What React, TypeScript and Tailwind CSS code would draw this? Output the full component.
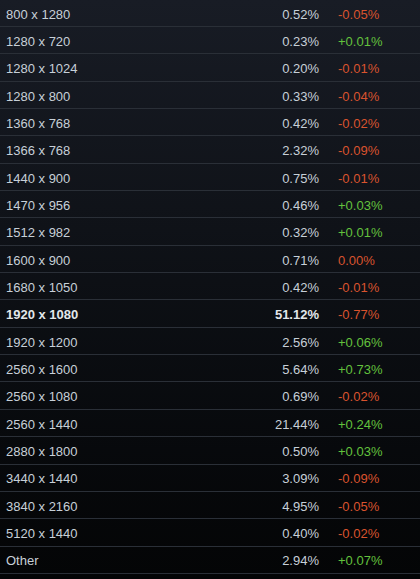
import React from "react";

type Row = { res: string; pct: string; change: string; bold?: boolean };

const rows: Row[] = [
  { res: "800 x 1280", pct: "0.52%", change: "-0.05%" },
  { res: "1280 x 720", pct: "0.23%", change: "+0.01%" },
  { res: "1280 x 1024", pct: "0.20%", change: "-0.01%" },
  { res: "1280 x 800", pct: "0.33%", change: "-0.04%" },
  { res: "1360 x 768", pct: "0.42%", change: "-0.02%" },
  { res: "1366 x 768", pct: "2.32%", change: "-0.09%" },
  { res: "1440 x 900", pct: "0.75%", change: "-0.01%" },
  { res: "1470 x 956", pct: "0.46%", change: "+0.03%" },
  { res: "1512 x 982", pct: "0.32%", change: "+0.01%" },
  { res: "1600 x 900", pct: "0.71%", change: "0.00%" },
  { res: "1680 x 1050", pct: "0.42%", change: "-0.01%" },
  { res: "1920 x 1080", pct: "51.12%", change: "-0.77%", bold: true },
  { res: "1920 x 1200", pct: "2.56%", change: "+0.06%" },
  { res: "2560 x 1600", pct: "5.64%", change: "+0.73%" },
  { res: "2560 x 1080", pct: "0.69%", change: "-0.02%" },
  { res: "2560 x 1440", pct: "21.44%", change: "+0.24%" },
  { res: "2880 x 1800", pct: "0.50%", change: "+0.03%" },
  { res: "3440 x 1440", pct: "3.09%", change: "-0.09%" },
  { res: "3840 x 2160", pct: "4.95%", change: "-0.05%" },
  { res: "5120 x 1440", pct: "0.40%", change: "-0.02%" },
  { res: "Other", pct: "2.94%", change: "+0.07%" },
];

const App = () => {
  return (
    <div
      className="w-[420px] h-[579px] overflow-hidden bg-gradient-to-b from-[#181c25] to-[#040506] text-[13px] text-[#c7d0d8]"
      style={{ fontFamily: '"Liberation Sans", Arial, sans-serif' }}
    >
      <div className="-mt-[0.35px]">
        {rows.map(({ res, pct, change, bold }) => (
          <div
            key={res}
            className="grid grid-cols-[1fr_auto_82px] items-center h-[27.35px] pt-[3px] border-b border-[#2a2f37] box-border"
          >
            <span className={`pl-[6px] ${bold ? "font-bold text-[#e3e7ea]" : ""}`}>
              {res}
            </span>
            <span
              className={`text-right pr-[19px] ${bold ? "font-bold text-[#e3e7ea]" : ""}`}
            >
              {pct}
            </span>
            <span
              className={
                change.startsWith("+") ? "text-[#63c13d]" : "text-[#d9532e]"
              }
            >
              {change}
            </span>
          </div>
        ))}
      </div>
    </div>
  );
};

export default App;
